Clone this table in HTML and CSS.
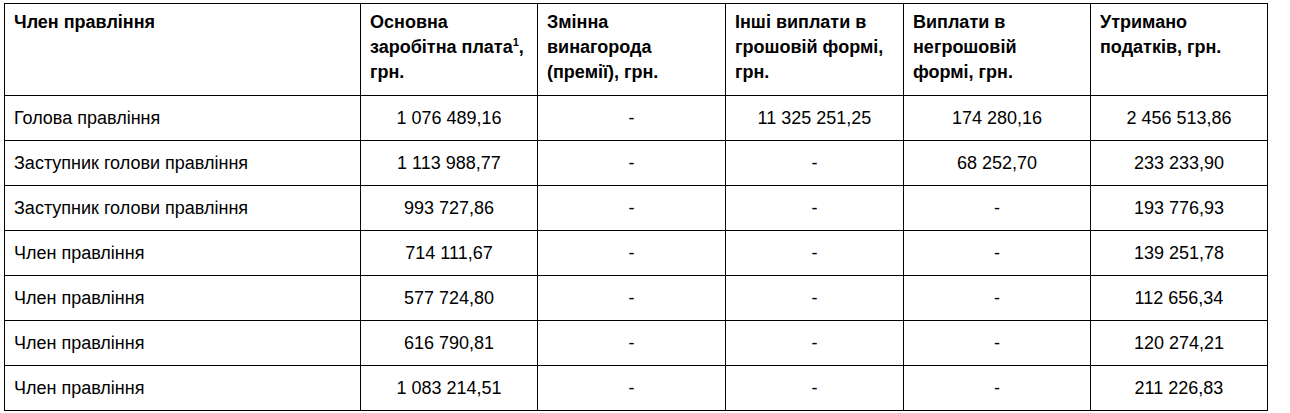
FILE: index.html
```html
<!DOCTYPE html>
<html lang="uk">
<head>
<meta charset="utf-8">
<link rel="stylesheet" href="styles.css">
</head>
<body>
<table class="pay">
  <colgroup>
    <col class="c1"><col class="c2"><col class="c3"><col class="c4"><col class="c5"><col class="c6">
  </colgroup>
  <thead>
    <tr>
      <th>Член правління</th>
      <th>Основна заробітна плата<sup>1</sup>, грн.</th>
      <th>Змінна винагорода (премії), грн.</th>
      <th>Інші виплати в грошовій формі, грн.</th>
      <th>Виплати в негрошовій формі, грн.</th>
      <th>Утримано податків, грн.</th>
    </tr>
  </thead>
  <tbody>
    <tr><td class="name">Голова правління</td><td>1 076 489,16</td><td>-</td><td>11 325 251,25</td><td>174 280,16</td><td>2 456 513,86</td></tr>
    <tr><td class="name">Заступник голови правління</td><td>1 113 988,77</td><td>-</td><td>-</td><td>68 252,70</td><td>233 233,90</td></tr>
    <tr><td class="name">Заступник голови правління</td><td>993 727,86</td><td>-</td><td>-</td><td>-</td><td>193 776,93</td></tr>
    <tr><td class="name">Член правління</td><td>714 111,67</td><td>-</td><td>-</td><td>-</td><td>139 251,78</td></tr>
    <tr><td class="name">Член правління</td><td>577 724,80</td><td>-</td><td>-</td><td>-</td><td>112 656,34</td></tr>
    <tr><td class="name">Член правління</td><td>616 790,81</td><td>-</td><td>-</td><td>-</td><td>120 274,21</td></tr>
    <tr><td class="name">Член правління</td><td>1 083 214,51</td><td>-</td><td>-</td><td>-</td><td>211 226,83</td></tr>
  </tbody>
</table>
</body>
</html>
```
FILE: styles.css
```css
html, body {
  margin: 0;
  padding: 0;
  background: #fff;
}
body {
  font-family: "Liberation Sans", Arial, sans-serif;
  font-size: 18px;
  color: #000;
  padding: 3px 0 0 4px;
}
.pay {
  border-collapse: collapse;
  table-layout: fixed;
  width: 1263px;
}
.c1 { width: 356px; }
.c2 { width: 177px; }
.c3 { width: 188px; }
.c4 { width: 178px; }
.c5 { width: 187px; }
.c6 { width: 177px; }
.pay th, .pay td {
  border: 1px solid #000;
  padding: 0 9px;
}
.pay th {
  height: 92px;
  box-sizing: border-box;
  text-align: left;
  vertical-align: top;
  font-weight: bold;
  line-height: 25px;
  padding-top: 6px;
}
.pay th sup {
  font-size: 11px;
  line-height: 0;
  vertical-align: 7px;
}
.pay td {
  height: 45px;
  box-sizing: border-box;
  text-align: center;
  vertical-align: middle;
  line-height: 20px;
}
.pay td.name {
  text-align: left;
}
```
